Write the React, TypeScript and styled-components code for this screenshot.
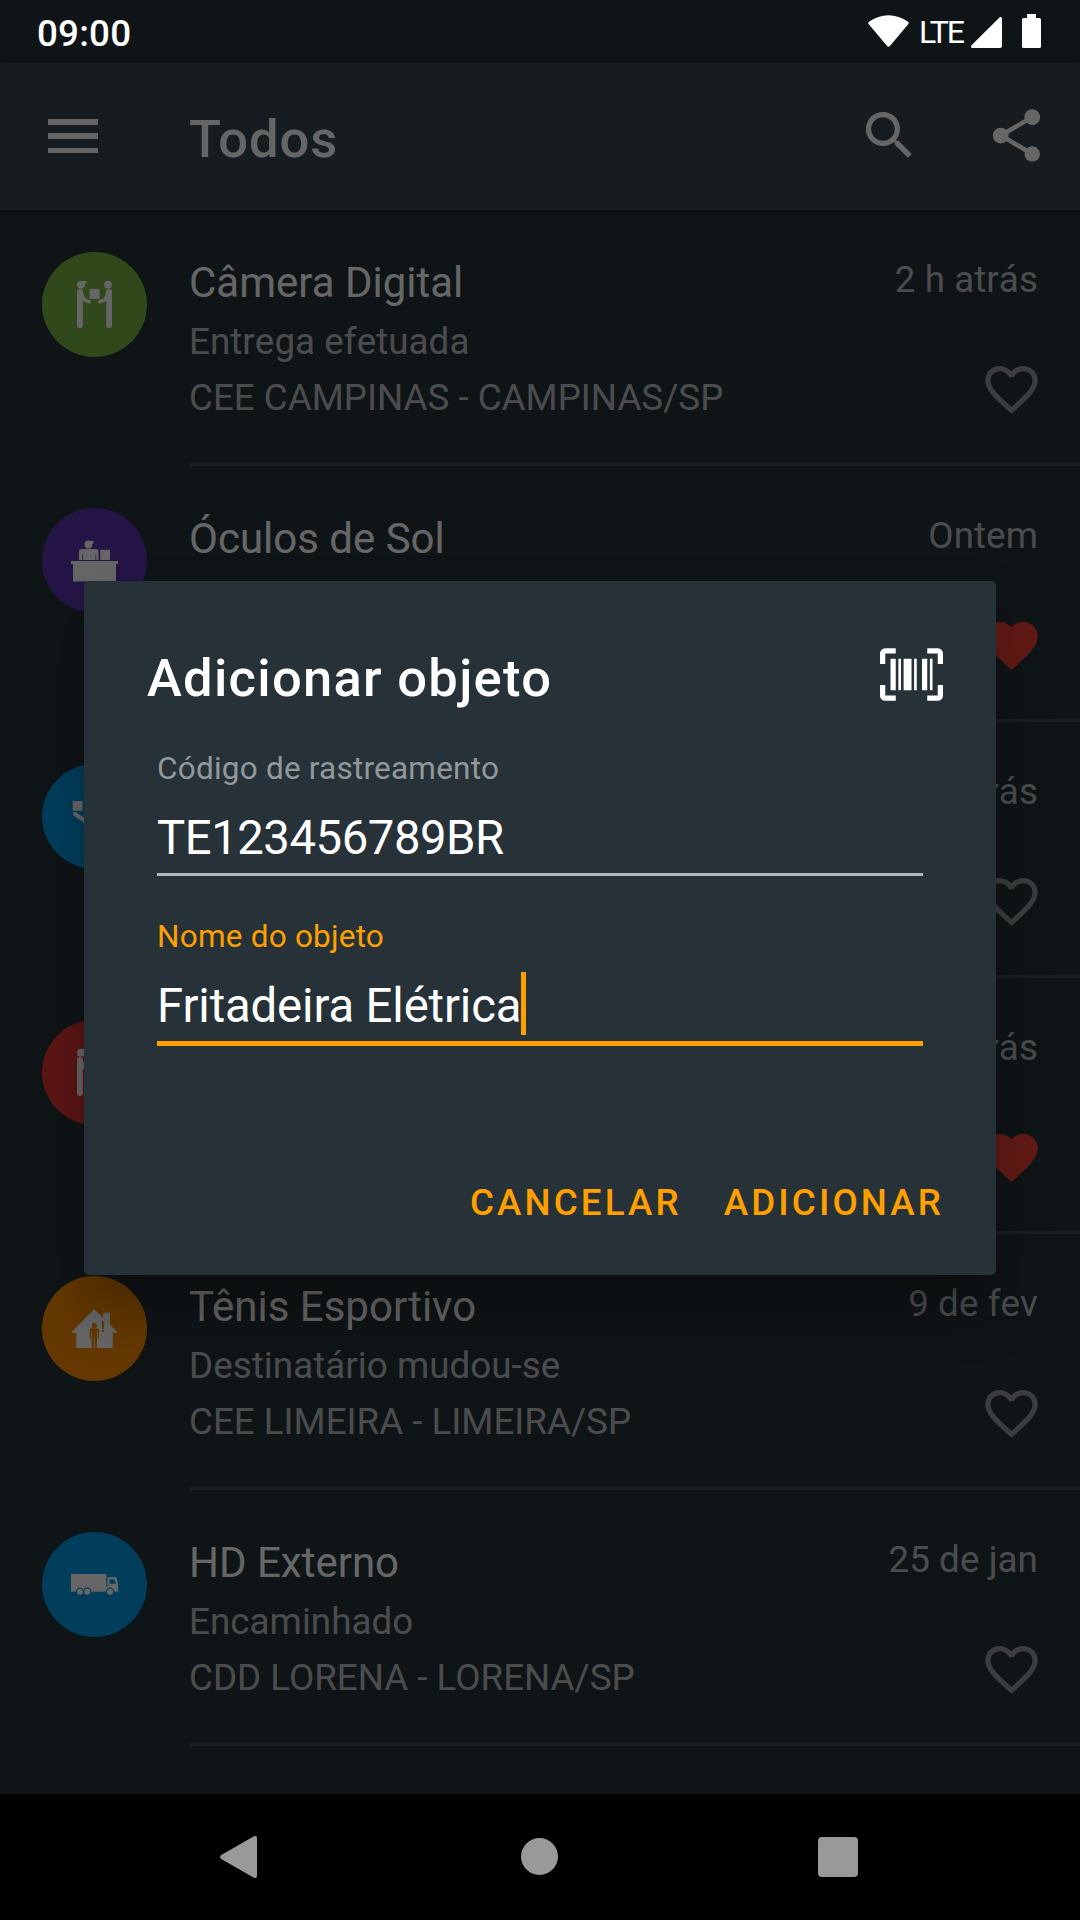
import React from "react";
import styled, { createGlobalStyle } from "styled-components";

const GlobalStyle = createGlobalStyle`
  body { margin: 0; background: #263238; }
  * { box-sizing: border-box; }
`;

const Screen = styled.div`
  position: relative;
  width: 1080px;
  height: 1920px;
  display: flex;
  flex-direction: column;
  overflow: hidden;
  background: #263238;
  color: #fff;
  font-family: Roboto, "Noto Sans", sans-serif;
`;

const StatusBar = styled.header`
  position: absolute;
  inset: 0 0 auto 0;
  z-index: 2;
  height: 63px;
  padding: 0 39px 0 37px;
  display: flex;
  justify-content: space-between;
`;

const Clock = styled.span`
  font-size: 36.75px;
  font-weight: 500;
  line-height: 44px;
  margin-top: 12px;
  letter-spacing: 0.2px;
`;

const StatusIcons = styled.div`
  display: flex;
  align-items: flex-start;
`;

const Network = styled.span`
  width: 62px;
  padding-left: 10px;
  padding-top: 12px;
  font-size: 32px;
  line-height: 40px;
  letter-spacing: -2.2px;
`;

const AppBar = styled.nav`
  position: relative;
  flex: none;
  height: 147px;
  margin-top: 63px;
  padding: 0 32px 0 42px;
  display: flex;
  align-items: center;
  background: #394650;
  box-shadow: 0 4px 10px rgba(0, 0, 0, 0.25);
`;

const AppTitle = styled.h1`
  flex: 1;
  margin: 0 0 0 84px;
  padding-top: 4px;
  font-size: 52.5px;
  font-weight: 500;
  line-height: 62px;
  letter-spacing: 0.9px;
`;

const BarActions = styled.div`
  display: flex;
  gap: 64px;
  margin-top: -3px;
`;

const MenuButton = styled.div`
  width: 63px;
  height: 34px;
  padding-left: 6px;
  margin-top: -1px;
  display: flex;
  flex-direction: column;
  justify-content: space-between;
`;

const MenuLine = styled.span`
  width: 50px;
  height: 5.5px;
  background: #fff;
`;

const List = styled.main`
  flex: 1;
`;

const Row = styled.article`
  height: 256px;
  display: flex;
  padding-left: 42px;
`;

const Avatar = styled.div<{ $color: string }>`
  flex: none;
  width: 105px;
  height: 105px;
  margin: 42px 42px 0 0;
  border-radius: 50%;
  background: ${(p) => p.$color};
`;

const RowBody = styled.div`
  flex: 1;
  display: flex;
  justify-content: space-between;
  padding: 48px 37px 0 0;
  border-bottom: 3px solid #424d53;
`;

const Lines = styled.div`
  display: flex;
  flex-direction: column;
  gap: 12px;
  white-space: nowrap;
`;

const ItemName = styled.h2`
  margin: 0;
  font-size: 42px;
  font-weight: 400;
  line-height: 50px;
`;

const ItemText = styled.p`
  margin: 0;
  font-size: 36.75px;
  line-height: 44px;
  color: rgba(255, 255, 255, 0.7);
`;

const ItemStatus = styled(ItemText)`
  font-kerning: none;
  letter-spacing: 0.05px;
`;

const Meta = styled.div`
  display: flex;
  flex-direction: column;
  align-items: flex-end;
  gap: 56px;
`;

const Time = styled(ItemText)`
  margin-right: 5px;
  font-kerning: none;
  letter-spacing: 0.08px;
`;

const NavBar = styled.footer`
  position: relative;
  z-index: 2;
  flex: none;
  height: 126px;
  padding: 0 222px 0 220px;
  display: flex;
  align-items: center;
  justify-content: space-between;
  background: #000;
`;

const HomeButton = styled.span`
  width: 37px;
  height: 37px;
  margin: 0 0 2px 4px;
  border-radius: 50%;
  background: #999;
`;

const RecentsButton = styled.span`
  width: 40px;
  height: 40px;
  border-radius: 4px;
  background: #999;
`;

const Scrim = styled.div`
  position: absolute;
  inset: 0 0 126px 0;
  z-index: 1;
  padding-top: 62px;
  display: flex;
  align-items: center;
  justify-content: center;
  background: rgba(0, 0, 0, 0.6);
`;

const Dialog = styled.section`
  width: 912px;
  height: 694px;
  padding: 62px 50px 0 63px;
  display: flex;
  flex-direction: column;
  border-radius: 5px;
  background: #263238;
  box-shadow: 0 33px 55px rgba(0, 0, 0, 0.3);
`;

const DialogHead = styled.div`
  display: flex;
  justify-content: space-between;
  height: 63px;
  padding-right: 3px;
`;

const DialogTitle = styled.h2`
  margin: 4px 0 0;
  font-size: 52.5px;
  font-weight: 500;
  line-height: 62px;
  letter-spacing: 1.28px;
`;

const Field = styled.label<{ $active?: boolean }>`
  display: flex;
  flex-direction: column;
  width: 766px;
  height: 168px;
  margin-left: 10px;
  color: ${(p) => (p.$active ? "#ffa000" : "#92989b")};
`;

const Fields = styled.div`
  margin-top: 43px;
`;

const FieldLabel = styled.span`
  padding-top: 1px;
  font-size: 31.5px;
  line-height: 38px;
  letter-spacing: 0.22px;
`;

const FieldValue = styled.span<{ $active?: boolean }>`
  height: ${(p) => (p.$active ? 90 : 88)}px;
  padding-top: 22px;
  display: flex;
  font-size: 47.25px;
  line-height: 56px;
  letter-spacing: ${(p) => (p.$active ? "-0.12px" : "-0.45px")};
  color: #fff;
  border-bottom: ${(p) => (p.$active ? "5px solid #ffa000" : "3px solid #b5b9bb")};
`;

const Caret = styled.i`
  width: 5px;
  height: 63px;
  margin-top: -6px;
  background: #ffa000;
`;

const Actions = styled.div`
  display: flex;
  justify-content: flex-end;
  gap: 42px;
  margin-top: 96px;
  padding-right: 2px;
`;

const Action = styled.button`
  padding: 0;
  border: 0;
  background: none;
  color: #ffa000;
  font: 500 36.75px/44px Roboto, "Noto Sans", sans-serif;
  letter-spacing: 3.1px;
`;

const PATHS = {
  search:
    "M15.5 14h-.79l-.28-.27A6.471 6.471 0 0 0 16 9.5 6.5 6.5 0 1 0 9.5 16c1.61 0 3.09-.59 4.23-1.57l.27.28v.79l5 4.99L20.49 19l-4.99-5zm-6 0C7.01 14 5 11.99 5 9.5S7.01 5 9.5 5 14 7.01 14 9.5 11.99 14 9.5 14z",
  share:
    "M18 16.08c-.76 0-1.44.3-1.96.77L8.91 12.7c.05-.23.09-.46.09-.7s-.04-.47-.09-.7l7.05-4.11c.54.5 1.25.81 2.04.81 1.66 0 3-1.34 3-3s-1.34-3-3-3-3 1.34-3 3c0 .24.04.47.09.7L8.04 9.81C7.5 9.31 6.79 9 6 9c-1.66 0-3 1.34-3 3s1.34 3 3 3c.79 0 1.5-.31 2.04-.81l7.12 4.16c-.05.21-.08.43-.08.65 0 1.61 1.31 2.92 2.92 2.92s2.92-1.31 2.92-2.92-1.31-2.92-2.92-2.92z",
  heart:
    "M12 21.35l-1.45-1.32C5.4 15.36 2 12.28 2 8.5 2 5.42 4.42 3 7.5 3c1.74 0 3.41.81 4.5 2.09C13.09 3.81 14.76 3 16.5 3 19.58 3 22 5.42 22 8.5c0 3.78-3.4 6.86-8.55 11.54L12 21.35z",
  heartOutline:
    "M16.5 3c-1.74 0-3.41.81-4.5 2.09C10.91 3.81 9.24 3 7.5 3 4.42 3 2 5.42 2 8.5c0 3.78 3.4 6.86 8.55 11.54L12 21.35l1.45-1.32C18.6 15.36 22 12.28 22 8.5 22 5.42 19.58 3 16.5 3zm-4.4 15.55l-.1.1-.1-.1C7.14 14.24 4 11.39 4 8.5 4 6.5 5.5 5 7.5 5c1.54 0 3.04.99 3.57 2.36h1.87C13.46 5.99 14.96 5 16.5 5c2 0 3.5 1.5 3.5 3.5 0 2.89-3.14 5.74-7.9 10.05z",
  barcode:
    "M4,6H6V18H4V6M7,6H8V18H7V6M9,6H12V18H9V6M13,6H14V18H13V6M16,6H18V18H16V6M19,6H20V18H19V6M2,4V8H0V4A2,2 0 0,1 2,2H6V4H2M22,2A2,2 0 0,1 24,4V8H22V4H18V2H22M2,16V20H6V22H2A2,2 0 0,1 0,20V16H2M22,20V16H24V20A2,2 0 0,1 22,22H18V20H22Z",
};

function Icon({ name, color = "#fff" }: { name: keyof typeof PATHS; color?: string }) {
  return (
    <svg width="63" height="63" viewBox="0 0 24 24" fill={color}>
      <path d={PATHS[name]} />
    </svg>
  );
}

type GlyphName = "handoff" | "counter" | "receive" | "moved" | "truck";

function Glyph({ name, bg }: { name: GlyphName; bg: string }) {
  return (
    <svg width="105" height="105" viewBox="0 0 105 105" fill="#fff">
      {name === "handoff" && (
        <>
          <circle cx="39" cy="32.7" r="3.9" />
          <path d="M38 29h6.8v1.6L42 33z" />
          <circle cx="66" cy="32.7" r="3.9" />
          <rect x="35" y="37" width="5.8" height="39" rx="2.8" />
          <rect x="64.2" y="37" width="5.8" height="39" rx="2.8" />
          <rect x="47.6" y="36.9" width="10" height="10" />
          <path
            d="M39 40q1.8 7.500 4.200 8.200l4 1.400M66 40q-1.800 7.500-4.200 8.200l-4 1.400"
            fill="none"
            stroke="#fff"
            strokeWidth="3.600"
            strokeLinecap="round"
          />
        </>
      )}
      {name === "counter" && (
        <>
          <circle cx="46.500" cy="36.400" r="3.900" />
          <path d="M46 33h5.800v1.600L49 37z" />
          <path d="M37 52v-8q0-3 3-3h13.500q3 0 3 3v8h-2.300v-5.500h-.7V52H40.800v-5.500h-.7V52z" />
          <rect x="58.200" y="41.800" width="9.800" height="10.200" />
          <rect x="29" y="53" width="47" height="3" />
          <rect x="31" y="55.500" width="43" height="18" />
        </>
      )}
      {name === "receive" && (
        <>
          <rect x="30.700" y="37" width="9.800" height="9.800" />
          <path d="M33 50l10 7h12" fill="none" stroke="#fff" strokeWidth="4.200" strokeLinecap="round" />
        </>
      )}
      {name === "moved" && (
        <>
          <path d="M52.300 33l9 9V36.700h6.700V48.500l8 8.200h-5.300V72H34.300V56.700H29z" />
          <g fill={bg}>
            <circle cx="52.300" cy="49.400" r="2.600" />
            <path d="M49.500 52.300h5.600q1.900 0 1.900 1.900v8.500h-1.300v-7.300h-.7V72h-2.300v-9.600h-.8V72h-2.300V55.400H49v7.300h-1.300v-8.500q0-1.900 1.800-1.900z" />
            <path d="M59.800 45h2.400l-.4 8h-1.600z" />
            <rect x="60" y="54" width="2" height="2" />
          </g>
        </>
      )}
      {name === "truck" && (
        <>
          <rect x="29" y="42" width="35.300" height="17.700" />
          <path d="M64 54.500h1.500V46.300q0-1.300 1.300-1.300h6.200q1.300 0 1.700 1.300l1.300 5.500v5.500h.2v2.400H64z" />
          <path d="M67.500 51.800v-4.600h4.900l1.500 4.600z" fill={bg} />
          {[38, 45.3, 68].map((cx) => (
            <circle key={cx} cx={cx} cy="59.700" r="3.600" stroke={bg} strokeWidth="1.100" />
          ))}
        </>
      )}
    </svg>
  );
}

type Item = {
  name?: string;
  status?: string;
  place?: string;
  time: string;
  favorite?: boolean;
  color: string;
  glyph: GlyphName;
};

const items: Item[] = [
  { name: "Câmera Digital", status: "Entrega efetuada", place: "CEE CAMPINAS - CAMPINAS/SP", time: "2 h atrás", color: "#7cb342", glyph: "handoff" },
  { name: "Óculos de Sol", time: "Ontem", favorite: true, color: "#5e35b1", glyph: "counter" },
  { time: "2 d atrás", color: "#039be5", glyph: "receive" },
  { time: "3 d atrás", favorite: true, color: "#e53935", glyph: "handoff" },
  { name: "Tênis Esportivo", status: "Destinatário mudou-se", place: "CEE LIMEIRA - LIMEIRA/SP", time: "9 de fev", color: "#fb8c00", glyph: "moved" },
  { name: "HD Externo", status: "Encaminhado", place: "CDD LORENA - LORENA/SP", time: "25 de jan", color: "#039be5", glyph: "truck" },
];

export default function App() {
  return (
    <Screen>
      <GlobalStyle />
      <StatusBar>
        <Clock>09:00</Clock>
        <StatusIcons>
          <svg width="41" height="63" viewBox="0 0 41 63" fill="#fff">
            <path d="M.8 24.300Q-.5 22.800 1 21.800 10 15.200 20.500 15.200T40 21.800Q41.500 22.800 40.200 24.300L21.900 46Q20.500 47.400 19.100 46Z" />
          </svg>
          <Network>LTE</Network>
          <svg width="70" height="63" viewBox="0 0 70 63" fill="#fff">
            <path d="M29 17q2-.5 2 1.500V46q0 2-2 2H1.500Q-.8 48 .3 45.500Z" />
            <path d="M56 14h9v4h3.500q1.500 0 1.500 1.500v27q0 1.500-1.500 1.500h-16q-1.500 0-1.500-1.500v-27q0-1.500 1.500-1.500H56z" />
          </svg>
        </StatusIcons>
      </StatusBar>

      <AppBar>
        <MenuButton>
          <MenuLine />
          <MenuLine />
          <MenuLine />
        </MenuButton>
        <AppTitle>Todos</AppTitle>
        <BarActions>
          <Icon name="search" />
          <Icon name="share" />
        </BarActions>
      </AppBar>

      <List>
        {items.map((item, i) => (
          <Row key={i}>
            <Avatar $color={item.color}>
              <Glyph name={item.glyph} bg={item.color} />
            </Avatar>
            <RowBody>
              <Lines>
                {item.name && <ItemName>{item.name}</ItemName>}
                {item.status && <ItemStatus>{item.status}</ItemStatus>}
                {item.place && <ItemText>{item.place}</ItemText>}
              </Lines>
              <Meta>
                <Time>{item.time}</Time>
                <Icon
                  name={item.favorite ? "heart" : "heartOutline"}
                  color={item.favorite ? "#f44336" : "rgba(255,255,255,0.5)"}
                />
              </Meta>
            </RowBody>
          </Row>
        ))}
      </List>

      <Scrim>
        <Dialog>
          <DialogHead>
            <DialogTitle>Adicionar objeto</DialogTitle>
            <Icon name="barcode" />
          </DialogHead>
          <Fields>
            <Field>
              <FieldLabel>Código de rastreamento</FieldLabel>
              <FieldValue>TE123456789BR</FieldValue>
            </Field>
            <Field $active>
              <FieldLabel>Nome do objeto</FieldLabel>
              <FieldValue $active>
                Fritadeira Elétrica
                <Caret />
              </FieldValue>
            </Field>
          </Fields>
          <Actions>
            <Action>CANCELAR</Action>
            <Action>ADICIONAR</Action>
          </Actions>
        </Dialog>
      </Scrim>

      <NavBar>
        <svg width="37" height="42" viewBox="0 0 37 42" fill="#999">
          <path d="M33.500.5Q37-1 37 2V40q0 3-3.500 1.500L1.200 23Q-1 21 1.200 19Z" />
        </svg>
        <HomeButton />
        <RecentsButton />
      </NavBar>
    </Screen>
  );
}
